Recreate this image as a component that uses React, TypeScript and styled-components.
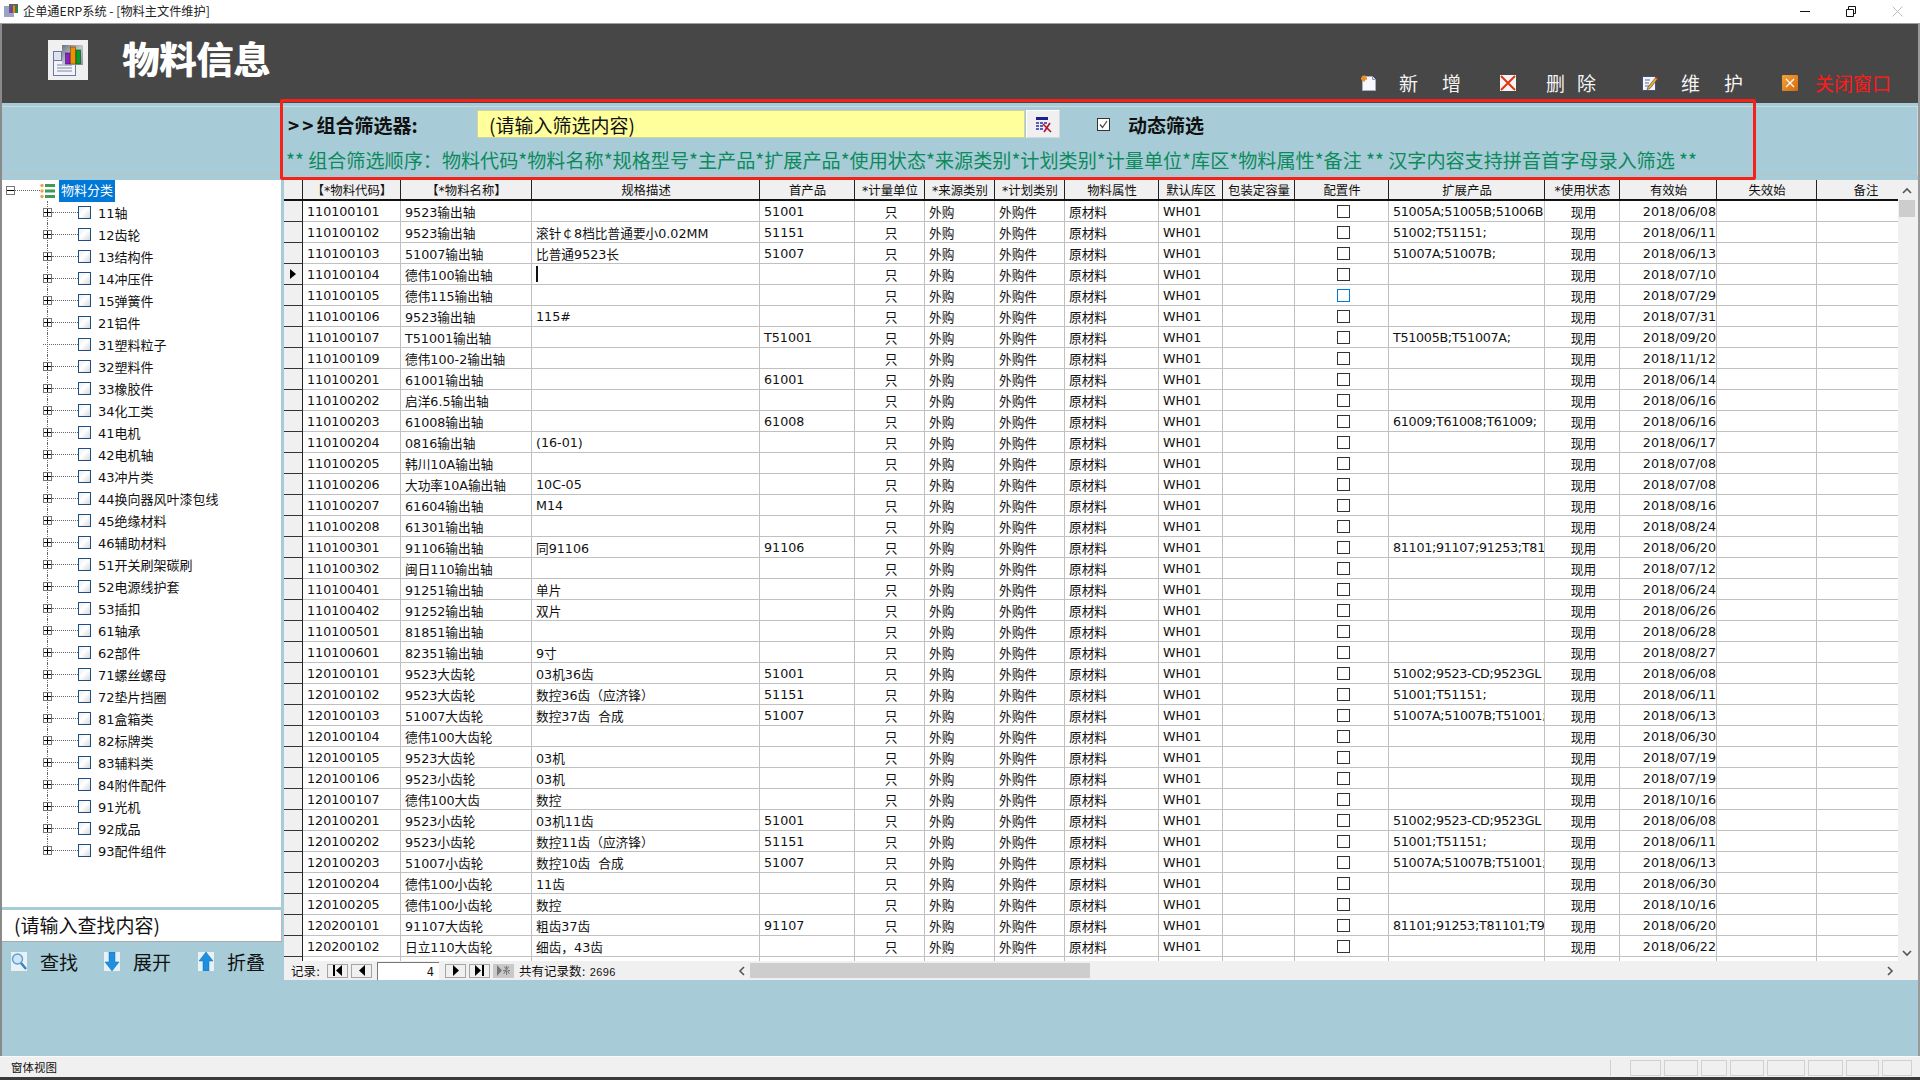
import React from 'react';
import styled, { createGlobalStyle } from 'styled-components';

const GlobalStyle = createGlobalStyle`
  html, body {
    margin: 0;
    padding: 0;
    background: #a7ccd7;
    overflow: hidden;
  }
  * {
    box-sizing: border-box;
  }
`;

const UI_FONT = `"DejaVu Sans", "Noto Sans CJK SC", sans-serif`;
const CJK_FONT = `"Noto Sans CJK SC", "Liberation Sans", sans-serif`;
const TEAL = '#a7ccd7';
const PANEL = '#f0f0f0';
const GRID_LINE = '#c0c0c0';
const COLUMNS = '19px 98px 131px 228px 95px 70px 70px 70px 94px 64px 72px 94px 156px 75px 97px 100px 81px';

const Page = styled.div`
  width: 1920px;
  height: 1080px;
  display: flex;
  flex-direction: column;
  overflow: hidden;
  background: ${TEAL};
  font-family: ${UI_FONT};
  color: #111;
`;

/* window chrome */
const TitleBar = styled.div`
  height: 24px;
  flex: none;
  display: flex;
  align-items: center;
  padding: 0 0 1px 4px;
  background: #fff;
  border-bottom: 1px solid #a0a0a0;
  font: 12.2px ${CJK_FONT};
  color: #222;
`;

const TitleText = styled.span`
  margin-left: 5px;
  flex: 1;
`;

const WindowButton = styled.div`
  width: 46px;
  height: 20px;
  display: flex;
  align-items: center;
  justify-content: center;
`;

const Workspace = styled.div`
  flex: none;
  height: 1032px;
  display: flex;
  flex-direction: column;
  border-left: 2px solid #8a8a8a;
  border-right: 2px solid #9a9a9a;
`;

/* dark header */
const Header = styled.header`
  height: 79px;
  flex: none;
  display: flex;
  background: #474747;
  padding-left: 46px;
`;

const LogoBox = styled.div`
  width: 40px;
  height: 40px;
  margin-top: 16px;
  background: ${PANEL};
`;

const HeaderTitle = styled.h1`
  margin: 10px 0 0 34px;
  font: 700 37px/48px ${CJK_FONT};
  color: #fff;
  text-shadow: 1px 0 0 #fff;
`;

const ToolBar = styled.div`
  display: flex;
  margin-left: auto;
  padding-right: 28px;
  align-items: flex-end;
  padding-bottom: 11px;
`;

const ToolButton = styled.div<{ $width: number }>`
  width: ${(p) => p.$width}px;
  display: flex;
  align-items: center;
  height: 18px;
`;

const ToolLabel = styled.span<{ $spacing?: number; $offset: number; $danger?: boolean }>`
  margin-left: ${(p) => p.$offset}px;
  font: 19px/18px ${CJK_FONT};
  letter-spacing: ${(p) => p.$spacing ?? 0}px;
  white-space: nowrap;
  color: ${(p) => (p.$danger ? '#ff1a1a' : '#f4f4f4')};
`;

/* filter band */
const FilterBand = styled.section`
  position: relative;
  height: 77px;
  flex: none;
  padding: 3px 0 4px;
`;

const FilterPanel = styled.div`
  height: 70px;
  border-top: 1px solid #c9dbe1;
  border-bottom: 1px solid #b9c2c6;
  border-right: 1px solid #c9dbe1;
  padding: 3px 0 0 284px;
`;

const FilterRow = styled.div`
  display: flex;
  align-items: center;
  height: 28px;
`;

const FilterLabel = styled.span`
  width: 191px;
  padding-left: 2px;
  font: 700 19px ${CJK_FONT};
  white-space: nowrap;
`;

const FilterArrows = styled.span`
  letter-spacing: 3px;
`;

const FilterInput = styled.input`
  width: 548px;
  height: 28px;
  padding: 0 0 0 11px;
  border: 1px solid #d3d3a0;
  background: #ffff9c;
  font: 19px ${CJK_FONT};
  color: #111;
  outline: none;
`;

const ClearButton = styled.div`
  width: 34px;
  height: 28px;
  margin-left: 1px;
  display: flex;
  align-items: center;
  justify-content: center;
  background: ${PANEL};
  border: 1px solid #fff;
  border-right-color: #d8d8d8;
  border-bottom-color: #d8d8d8;
`;

const CheckBox = styled.span<{ $focus?: boolean }>`
  width: 13px;
  height: 13px;
  display: inline-flex;
  align-items: center;
  justify-content: center;
  background: #fff;
  border: 1px solid ${(p) => (p.$focus ? '#0078d7' : '#333')};
`;

const DynamicCheck = styled(CheckBox)`
  margin-left: 37px;
`;

const DynamicLabel = styled.span`
  margin-left: 18px;
  font: 700 19px ${CJK_FONT};
`;

const OrderHint = styled.div`
  margin-top: 9px;
  font: 19.13px/26px ${CJK_FONT};
  color: #0d8a5c;
  white-space: nowrap;
`;

const RedFrame = styled.div`
  position: absolute;
  left: 278px;
  top: -4px;
  width: 1476px;
  height: 81px;
  border: 3px solid #f4231a;
  border-radius: 2px;
  pointer-events: none;
`;

/* main body */
const Body = styled.div`
  height: 800px;
  flex: none;
  display: flex;
  gap: 3px;
`;

const LeftColumn = styled.aside`
  width: 279px;
  flex: none;
  display: flex;
  flex-direction: column;
`;

const TreePanel = styled.div`
  height: 727px;
  flex: none;
  background: #fff;
  font-size: 13px;
`;

const TreeRow = styled.div<{ $last?: boolean }>`
  position: relative;
  height: 22px;
  display: flex;
  align-items: center;
  padding-left: 41px;
  &::before {
    content: '';
    position: absolute;
    left: 45px;
    top: 0;
    height: ${(p) => (p.$last ? '11px' : '22px')};
    border-left: 1px dotted #666;
  }
`;

const RootRow = styled.div`
  height: 21px;
  display: flex;
  align-items: center;
  padding-left: 4px;
`;

const ExpandBox = styled.span`
  position: relative;
  z-index: 1;
  width: 9px;
  height: 9px;
  flex: none;
  display: inline-flex;
  align-items: center;
  justify-content: center;
  background: #fff;
  border: 1px solid #777;
`;

const Connector = styled.span<{ $width: number }>`
  width: ${(p) => p.$width}px;
  flex: none;
  border-top: 1px dotted #666;
`;

const NodeBox = styled.span`
  width: 13px;
  height: 13px;
  flex: none;
  border: 1px solid #1d4f80;
  background: linear-gradient(135deg, #f4f4f4 20%, #fff 45%, #d9d9d9 100%);
`;

const NodeLabel = styled.span`
  margin-left: 7px;
  white-space: nowrap;
`;

const RootLabel = styled.span`
  height: 22px;
  margin-left: 4px;
  padding: 0 2px;
  line-height: 22px;
  background: #0078d7;
  color: #fff;
`;

const SearchInput = styled.input`
  height: 32px;
  flex: none;
  margin: 3px -1px 0 0;
  padding: 0 0 3px 12px;
  background: #fff;
  border: 0;
  border-bottom: 1px solid #a8a8a8;
  border-right: 1px solid #b8b8b8;
  font: 19px ${CJK_FONT};
  color: #111;
  outline: none;
`;

const TreeActions = styled.div`
  height: 38px;
  display: flex;
  align-items: center;
  padding-left: 9px;
`;

const TreeAction = styled.div<{ $width: number }>`
  width: ${(p) => p.$width}px;
  display: flex;
  align-items: center;
  gap: 13px;
  font: 19px ${CJK_FONT};
  letter-spacing: 0;
`;

/* data grid */
const GridArea = styled.div`
  flex: 1;
  min-width: 0;
  display: flex;
  flex-direction: column;
`;

const GridBody = styled.div`
  height: 781px;
  flex: none;
  display: flex;
  background: #fff;
`;

const Table = styled.div`
  width: 1614px;
  flex: none;
  overflow: hidden;
  font-size: 12.7px;
`;

const HeaderRow = styled.div`
  display: grid;
  grid-template-columns: ${COLUMNS};
  height: 21px;
  font-size: 12.4px;
  background: ${PANEL};
  border-bottom: 2px solid #111;
`;

const HeaderCell = styled.div`
  display: flex;
  align-items: center;
  justify-content: center;
  padding-left: 1px;
  border-right: 1px solid #222;
  white-space: nowrap;
  overflow: hidden;
  &:last-child {
    padding-left: 17px;
    border-right: 0;
  }
`;

const DataRow = styled.div`
  display: grid;
  grid-template-columns: ${COLUMNS};
  height: 21px;
`;

const Selector = styled.div`
  display: flex;
  align-items: center;
  justify-content: center;
  background: ${PANEL};
  border-right: 1px solid #222;
  border-bottom: 1px solid #333;
`;

const Pointer = styled.span`
  width: 0;
  height: 0;
  border-left: 6px solid #000;
  border-top: 5.5px solid transparent;
  border-bottom: 5.5px solid transparent;
`;

const Cell = styled.div<{ $align?: 'center' | 'right' }>`
  display: flex;
  align-items: center;
  justify-content: ${(p) => (p.$align === 'center' ? 'center' : p.$align === 'right' ? 'flex-end' : 'flex-start')};
  padding: 0 ${(p) => (p.$align === 'right' ? '0' : p.$align === 'center' ? '1px' : '2px')} 0
    ${(p) => (p.$align === 'right' ? '0' : '4px')};
  border-right: 1px solid ${GRID_LINE};
  border-bottom: 1px solid ${GRID_LINE};
  white-space: pre;
  overflow: hidden;
  &:last-child {
    border-right: 0;
  }
`;

const ExtendedCell = styled(Cell)`
  padding-right: 0;
  letter-spacing: -0.28px;
`;

const Caret = styled.span`
  width: 2px;
  height: 16px;
  background: #111;
`;

const VScroll = styled.div`
  flex: 1;
  display: flex;
  flex-direction: column;
  align-items: center;
  background: ${PANEL};
  padding: 6px 2px 0 0;
`;

const VThumb = styled.div`
  width: 16px;
  height: 17px;
  margin-top: 4px;
  background: #cdcdcd;
`;

const VBottom = styled.div`
  margin-top: auto;
  padding-bottom: 3px;
`;

const GridFooter = styled.div`
  height: 19px;
  flex: none;
  display: flex;
  align-items: center;
  background: ${PANEL};
  padding-left: 7px;
  font-size: 12.5px;
`;

const RecordLabel = styled.span`
  width: 36px;
  flex: none;
`;

const NavButton = styled.div<{ $gap?: number; $disabled?: boolean }>`
  width: 21px;
  height: 14px;
  flex: none;
  margin-left: ${(p) => p.$gap ?? 3}px;
  display: flex;
  align-items: center;
  justify-content: center;
  background: ${(p) => (p.$disabled ? '#c9c9c9' : PANEL)};
  border: 1px solid ${(p) => (p.$disabled ? '#c9c9c9' : '#a5a5a5')};
  color: ${(p) => (p.$disabled ? '#777' : '#000')};
`;

const RecordInput = styled.div`
  width: 62px;
  height: 18px;
  flex: none;
  margin: 1px 0 0 5px;
  padding-right: 5px;
  background: #fff;
  border-top: 1px solid #777;
  border-left: 1px solid #777;
  text-align: right;
  font-size: 11.5px;
  line-height: 18px;
`;

const RecordCount = styled.span`
  width: 215px;
  flex: none;
  margin-left: 5px;
  white-space: nowrap;
`;

const CountValue = styled.span`
  font: 11px "Liberation Sans", sans-serif;
  letter-spacing: 0.4px;
`;

const HScroll = styled.div`
  flex: 1;
  display: flex;
  align-items: center;
  padding-right: 20px;
`;

const HTrack = styled.div`
  flex: 1;
`;

const HThumb = styled.div`
  width: 340px;
  height: 15px;
  background: #cdcdcd;
`;

/* status bar */
const StatusBar = styled.footer`
  flex: none;
  height: 21px;
  display: flex;
  align-items: center;
  gap: 3px;
  padding: 2px 5px 1px 9px;
  background: ${PANEL};
  border-top: 1px solid #fafafa;
`;

const StatusMain = styled.div`
  width: 1602px;
  height: 16px;
  margin-right: 16px;
  padding-left: 2px;
  border-right: 1px solid #d0d0d0;
  font-size: 11.5px;
  line-height: 16px;
`;

const StatusCell = styled.div<{ $width: number }>`
  width: ${(p) => p.$width}px;
  height: 16px;
  border: 1px solid #d0d0d0;
`;

const BottomEdge = styled.div`
  height: 3px;
  flex: 1;
  background: #3a3a3a;
`;

/* drawings */
const AppGlyph = () => (
  <svg width="14" height="14" viewBox="0 0 14 14">
    <rect x="0" y="2" width="10" height="11" fill="#9aa4c4" />
    <rect x="5" y="0" width="9" height="9" fill="#5a6070" />
    <rect x="6.5" y="4" width="2" height="5" fill="#8a2cc0" />
    <rect x="9" y="1.5" width="2" height="7.5" fill="#e98a00" />
    <rect x="11.5" y="3" width="2" height="6" fill="#0d9a2c" />
  </svg>
);

const LogoIcon = () => (
  <svg width="40" height="40" viewBox="0 0 40 40">
    <defs>
      <linearGradient id="logoPane" x1="0" y1="0" x2="1" y2="1">
        <stop offset="0" stopColor="#6b7186" />
        <stop offset="0.5" stopColor="#c3c6d0" />
        <stop offset="1" stopColor="#8b90a0" />
      </linearGradient>
    </defs>
    <rect x="5.5" y="11.5" width="22" height="24" fill="#f4f4f8" stroke="#6c76a8" />
    <rect x="5.5" y="11.5" width="8" height="9" fill="#dfe3ee" stroke="#6c76a8" />
    <path d="M9 25h15M9 28h15M9 31h15" stroke="#7c86a8" />
    <rect x="14" y="5" width="21" height="20" fill="url(#logoPane)" />
    <rect x="17.5" y="13" width="4.5" height="11" fill="#8a22c4" stroke="#3c1464" strokeWidth="0.6" />
    <rect x="22.5" y="7" width="5" height="17" fill="#f09000" stroke="#6e4000" strokeWidth="0.6" />
    <rect x="28" y="10" width="4.5" height="14" fill="#0b9c28" stroke="#084e16" strokeWidth="0.6" />
  </svg>
);

const NewIcon = () => (
  <svg width="16" height="16" viewBox="0 0 16 16" style={{ flex: 'none' }}>
    <path d="M1.5 1.5h10l3 3v11h-13z" fill="#f7f8fc" stroke="#a6aec6" />
    <path d="M11.5 1.5v3h3" fill="#dfe4f2" stroke="#8d96b4" />
    <path d="M0 3.5h6M3 0.5v6" stroke="#f28a1c" strokeWidth="2.4" />
  </svg>
);

const DeleteIcon = () => (
  <svg width="16" height="16" viewBox="0 0 16 16" style={{ flex: 'none' }}>
    <rect width="16" height="16" fill="#f4f4f4" />
    <path d="M1 1l14 14M15 1L1 15" stroke="#e2330f" strokeWidth="2" />
  </svg>
);

const EditIcon = () => (
  <svg width="16" height="16" viewBox="0 0 16 16" style={{ flex: 'none' }}>
    <rect x="0.5" y="1.5" width="13" height="14" fill="#f4f6fb" stroke="#46507c" />
    <path d="M3 5h5M3 8h4M3 11h7" stroke="#5a6690" />
    <path d="M6 12l8-10 2 1.5-8 10-3 1z" fill="#e8b11a" stroke="#3c3c50" strokeWidth="0.6" />
    <path d="M14 2l2 1.5-1 1-2-1.5z" fill="#e0301c" />
  </svg>
);

const CloseIcon = () => (
  <svg width="16" height="16" viewBox="0 0 16 16" style={{ flex: 'none' }}>
    <defs>
      <linearGradient id="closeFill" x1="0" y1="0" x2="1" y2="1">
        <stop offset="0" stopColor="#f7a23a" />
        <stop offset="1" stopColor="#d16a0c" />
      </linearGradient>
    </defs>
    <rect width="16" height="16" rx="1" fill="url(#closeFill)" />
    <path d="M4 4l8 8M12 4l-8 8" stroke="#fff" strokeWidth="1.2" />
  </svg>
);

const ClearFilterIcon = () => (
  <svg width="17" height="17" viewBox="0 0 17 17">
    <rect x="1" y="1" width="12" height="3" fill="#20208c" />
    <path d="M1 6h3v2H1zM5 6h3v2H5zM9 6h3v2H9zM1 9h3v2H1zM5 9h3v2H5zM1 12h3v2H1zM5 12h3v2H5z" fill="#5c5cc0" />
    <path d="M8 8l8 8M15 7l-6 9" stroke="#b01030" strokeWidth="1.6" />
  </svg>
);

const CheckMark = () => (
  <svg width="9" height="9" viewBox="0 0 9 9">
    <path d="M1 4.5l2.5 3L8 1" fill="none" stroke="#444" strokeWidth="1.2" />
  </svg>
);

const TreeRootIcon = () => (
  <svg width="15" height="16" viewBox="0 0 15 16" style={{ flex: 'none' }}>
    <circle cx="2" cy="2.5" r="1.7" fill="#f0a14a" />
    <circle cx="2" cy="8" r="1.7" fill="#f0a14a" />
    <circle cx="2" cy="13.5" r="1.7" fill="#f0a14a" />
    <rect x="5" y="1" width="10" height="3" fill="#3f9a56" />
    <rect x="5" y="6.5" width="10" height="3" fill="#3f9a56" />
    <rect x="5" y="12" width="10" height="3" fill="#3f9a56" />
  </svg>
);

const Plus = () => (
  <svg width="7" height="7" viewBox="0 0 7 7">
    <path d="M0 3.5h7M3.5 0v7" stroke="#000" />
  </svg>
);

const Minus = () => (
  <svg width="7" height="7" viewBox="0 0 7 7">
    <path d="M0 3.5h7" stroke="#000" />
  </svg>
);

const SearchIcon = () => (
  <svg width="16" height="19" viewBox="0 0 16 19" style={{ flex: 'none' }}>
    <rect width="16" height="19" fill="#e8f2f6" />
    <circle cx="6.5" cy="7" r="5" fill="#cfe6f7" stroke="#5f9ed2" strokeWidth="1.4" />
    <path d="M10 11l5 6" stroke="#3d7fb8" strokeWidth="2.4" />
  </svg>
);

const ArrowIcon = ({ up }: { up?: boolean }) => (
  <svg width="16" height="19" viewBox="0 0 16 19" style={{ flex: 'none' }}>
    <rect width="16" height="19" fill="#e8f2f6" />
    <path
      d={up ? 'M8 0l7 9h-4v10H5V9H1z' : 'M8 19l7-9h-4V0H5v10H1z'}
      fill="#1f8fe0"
      stroke="#0f6cb8"
      strokeWidth="0.5"
    />
  </svg>
);

const NavGlyph = ({ d }: { d: string }) => (
  <svg width="13" height="11" viewBox="0 0 13 11" fill="currentColor">
    <path d={d} />
  </svg>
);

const Chevron = ({ d }: { d: string }) => (
  <svg width="16" height="10" viewBox="0 0 16 10" style={{ flex: 'none', display: 'block' }}>
    <path d={d} fill="none" stroke="#555" strokeWidth="1.6" />
  </svg>
);

/* data */
const treeNodes = [
  '11轴', '12齿轮', '13结构件', '14冲压件', '15弹簧件', '21铝件', '31塑料粒子', '32塑料件', '33橡胶件', '34化工类',
  '41电机', '42电机轴', '43冲片类', '44换向器风叶漆包线', '45绝缘材料', '46辅助材料', '51开关刷架碳刷', '52电源线护套',
  '53插扣', '61轴承', '62部件', '71螺丝螺母', '72垫片挡圈', '81盒箱类', '82标牌类', '83辅料类', '84附件配件', '91光机',
  '92成品', '93配件组件',
];

const headers = [
  '【*物料代码】', '【*物料名称】', '规格描述', '首产品', '*计量单位', '*来源类别', '*计划类别', '物料属性', '默认库区',
  '包装定容量', '配置件', '扩展产品', '*使用状态', '有效始', '失效始', '备注',
];

// code, name, spec, first product, extended products, valid from
const rows: string[][] = [
  ['110100101', '9523输出轴', '', '51001', '51005A;51005B;51006B', '2018/06/08'],
  ['110100102', '9523输出轴', '滚针￠8档比普通要小0.02MM', '51151', '51002;T51151;', '2018/06/11'],
  ['110100103', '51007输出轴', '比普通9523长', '51007', '51007A;51007B;', '2018/06/13'],
  ['110100104', '德伟100输出轴', '', '', '', '2018/07/10'],
  ['110100105', '德伟115输出轴', '', '', '', '2018/07/29'],
  ['110100106', '9523输出轴', '115#', '', '', '2018/07/31'],
  ['110100107', 'T51001输出轴', '', 'T51001', 'T51005B;T51007A;', '2018/09/20'],
  ['110100109', '德伟100-2输出轴', '', '', '', '2018/11/12'],
  ['110100201', '61001输出轴', '', '61001', '', '2018/06/14'],
  ['110100202', '启洋6.5输出轴', '', '', '', '2018/06/16'],
  ['110100203', '61008输出轴', '', '61008', '61009;T61008;T61009;', '2018/06/16'],
  ['110100204', '0816输出轴', '(16-01)', '', '', '2018/06/17'],
  ['110100205', '韩川10A输出轴', '', '', '', '2018/07/08'],
  ['110100206', '大功率10A输出轴', '10C-05', '', '', '2018/07/08'],
  ['110100207', '61604输出轴', 'M14', '', '', '2018/08/16'],
  ['110100208', '61301输出轴', '', '', '', '2018/08/24'],
  ['110100301', '91106输出轴', '同91106', '91106', '81101;91107;91253;T81', '2018/06/20'],
  ['110100302', '闽日110输出轴', '', '', '', '2018/07/12'],
  ['110100401', '91251输出轴', '单片', '', '', '2018/06/24'],
  ['110100402', '91252输出轴', '双片', '', '', '2018/06/26'],
  ['110100501', '81851输出轴', '', '', '', '2018/06/28'],
  ['110100601', '82351输出轴', '9寸', '', '', '2018/08/27'],
  ['120100101', '9523大齿轮', '03机36齿', '51001', '51002;9523-CD;9523GL', '2018/06/08'],
  ['120100102', '9523大齿轮', '数控36齿（应济锋）', '51151', '51001;T51151;', '2018/06/11'],
  ['120100103', '51007大齿轮', '数控37齿  合成', '51007', '51007A;51007B;T51001;', '2018/06/13'],
  ['120100104', '德伟100大齿轮', '', '', '', '2018/06/30'],
  ['120100105', '9523大齿轮', '03机', '', '', '2018/07/19'],
  ['120100106', '9523小齿轮', '03机', '', '', '2018/07/19'],
  ['120100107', '德伟100大齿', '数控', '', '', '2018/10/16'],
  ['120100201', '9523小齿轮', '03机11齿', '51001', '51002;9523-CD;9523GL', '2018/06/08'],
  ['120100202', '9523小齿轮', '数控11齿（应济锋）', '51151', '51001;T51151;', '2018/06/11'],
  ['120100203', '51007小齿轮', '数控10齿  合成', '51007', '51007A;51007B;T51001;', '2018/06/13'],
  ['120100204', '德伟100小齿轮', '11齿', '', '', '2018/06/30'],
  ['120100205', '德伟100小齿轮', '数控', '', '', '2018/10/16'],
  ['120200101', '91107大齿轮', '粗齿37齿', '91107', '81101;91253;T81101;T9', '2018/06/20'],
  ['120200102', '日立110大齿轮', '细齿，43齿', '', '', '2018/06/22'],
  ['', '', '', '', '', ''],
];

const statusCells = [31, 34, 26, 34, 38, 35, 33, 30];

const GridRow = ({ row, index }: { row: string[]; index: number }) => {
  const [code, name, spec, first, extended, date] = row;
  const filled = code !== '';
  return (
    <DataRow>
      <Selector>{index === 3 && <Pointer />}</Selector>
      <Cell>{code}</Cell>
      <Cell>{name}</Cell>
      <Cell>{index === 3 ? <Caret /> : spec}</Cell>
      <Cell>{first}</Cell>
      <Cell $align="center">{filled && '只'}</Cell>
      <Cell>{filled && '外购'}</Cell>
      <Cell>{filled && '外购件'}</Cell>
      <Cell>{filled && '原材料'}</Cell>
      <Cell>{filled && 'WH01'}</Cell>
      <Cell />
      <Cell $align="center">{filled && <CheckBox $focus={index === 4} />}</Cell>
      <ExtendedCell>{extended}</ExtendedCell>
      <Cell $align="center">{filled && '现用'}</Cell>
      <Cell $align="right">{date}</Cell>
      <Cell />
      <Cell />
    </DataRow>
  );
};

const App: React.FC = () => (
  <Page>
    <GlobalStyle />
    <TitleBar>
      <AppGlyph />
      <TitleText>企单通ERP系统 - [物料主文件维护]</TitleText>
      <WindowButton>
        <svg width="10" height="10" viewBox="0 0 10 10">
          <path d="M0 5.5h10" stroke="#111" />
        </svg>
      </WindowButton>
      <WindowButton>
        <svg width="10" height="11" viewBox="0 0 10 11">
          <path d="M0.5 3.5h7v7h-7zM2.5 3.5v-3h7v7h-2" fill="none" stroke="#111" />
        </svg>
      </WindowButton>
      <WindowButton>
        <svg width="11" height="11" viewBox="0 0 11 11">
          <path d="M0.5 0.5l10 10M10.5 0.5l-10 10" stroke="#bdbdbd" />
        </svg>
      </WindowButton>
    </TitleBar>
    <Workspace>
      <Header>
        <LogoBox>
          <LogoIcon />
        </LogoBox>
        <HeaderTitle>物料信息</HeaderTitle>
        <ToolBar>
          <ToolButton $width={139}>
            <NewIcon />
            <ToolLabel $offset={22} $spacing={24}>新增</ToolLabel>
          </ToolButton>
          <ToolButton $width={142}>
            <DeleteIcon />
            <ToolLabel $offset={30} $spacing={12}>删除</ToolLabel>
          </ToolButton>
          <ToolButton $width={140}>
            <EditIcon />
            <ToolLabel $offset={23} $spacing={24}>维护</ToolLabel>
          </ToolButton>
          <ToolButton $width={108}>
            <CloseIcon />
            <ToolLabel $offset={17} $danger>关闭窗口</ToolLabel>
          </ToolButton>
        </ToolBar>
      </Header>
      <FilterBand>
        <FilterPanel>
          <FilterRow>
            <FilterLabel>
              <FilterArrows>&gt;&gt;</FilterArrows>组合筛选器:
            </FilterLabel>
            <FilterInput defaultValue="(请输入筛选内容)" />
            <ClearButton>
              <ClearFilterIcon />
            </ClearButton>
            <DynamicCheck>
              <CheckMark />
            </DynamicCheck>
            <DynamicLabel>动态筛选</DynamicLabel>
          </FilterRow>
          <OrderHint>
            ** 组合筛选顺序：物料代码*物料名称*规格型号*主产品*扩展产品*使用状态*来源类别*计划类别*计量单位*库区*物料属性*备注 ** 汉字内容支持拼音首字母录入筛选 **
          </OrderHint>
        </FilterPanel>
        <RedFrame />
      </FilterBand>
      <Body>
        <LeftColumn>
          <TreePanel>
            <RootRow>
              <ExpandBox>
                <Minus />
              </ExpandBox>
              <Connector $width={25} />
              <TreeRootIcon />
              <RootLabel>物料分类</RootLabel>
            </RootRow>
            {treeNodes.map((node, i) => (
              <TreeRow key={node} $last={i === treeNodes.length - 1}>
                {node === '31塑料粒子' ? (
                  <Connector $width={35} />
                ) : (
                  <>
                    <ExpandBox>
                      <Plus />
                    </ExpandBox>
                    <Connector $width={26} />
                  </>
                )}
                <NodeBox />
                <NodeLabel>{node}</NodeLabel>
              </TreeRow>
            ))}
          </TreePanel>
          <SearchInput defaultValue="(请输入查找内容)" />
          <TreeActions>
            <TreeAction $width={93}>
              <SearchIcon />
              查找
            </TreeAction>
            <TreeAction $width={94}>
              <ArrowIcon />
              展开
            </TreeAction>
            <TreeAction $width={80}>
              <ArrowIcon up />
              折叠
            </TreeAction>
          </TreeActions>
        </LeftColumn>
        <GridArea>
          <GridBody>
            <Table>
              <HeaderRow>
                <HeaderCell />
                {headers.map((h) => (
                  <HeaderCell key={h}>{h}</HeaderCell>
                ))}
              </HeaderRow>
              {rows.map((row, i) => (
                <GridRow key={i} row={row} index={i} />
              ))}
            </Table>
            <VScroll>
              <Chevron d="M4 7l4-4 4 4" />
              <VThumb />
              <VBottom>
                <Chevron d="M4 3l4 4 4-4" />
              </VBottom>
            </VScroll>
          </GridBody>
          <GridFooter>
            <RecordLabel>记录:</RecordLabel>
            <NavButton $gap={0}>
              <NavGlyph d="M2 0h2v11H2zM11 0v11L5 5.5z" />
            </NavButton>
            <NavButton>
              <NavGlyph d="M10 0v11L4 5.5z" />
            </NavButton>
            <RecordInput>4</RecordInput>
            <NavButton $gap={6}>
              <NavGlyph d="M4 0v11l6-5.5z" />
            </NavButton>
            <NavButton>
              <NavGlyph d="M2 0v11l6-5.5zM9 0h2v11H9z" />
            </NavButton>
            <NavButton $disabled>
              <NavGlyph d="M0 0v11l5-5.5zM9 1v9h1V1zM6 5h7v1H6zM7 2l5 7 .8-.6-5-7zM12 2l-5 7-.8-.6 5-7z" />
            </NavButton>
            <RecordCount>
              共有记录数: <CountValue>2696</CountValue>
            </RecordCount>
            <HScroll>
              <Chevron d="M10 1l-4 4 4 4" />
              <HTrack>
                <HThumb />
              </HTrack>
              <Chevron d="M6 1l4 4-4 4" />
            </HScroll>
          </GridFooter>
        </GridArea>
      </Body>
    </Workspace>
    <StatusBar>
      <StatusMain>窗体视图</StatusMain>
      {statusCells.map((w, i) => (
        <StatusCell key={i} $width={w} />
      ))}
    </StatusBar>
    <BottomEdge />
  </Page>
);

export default App;
